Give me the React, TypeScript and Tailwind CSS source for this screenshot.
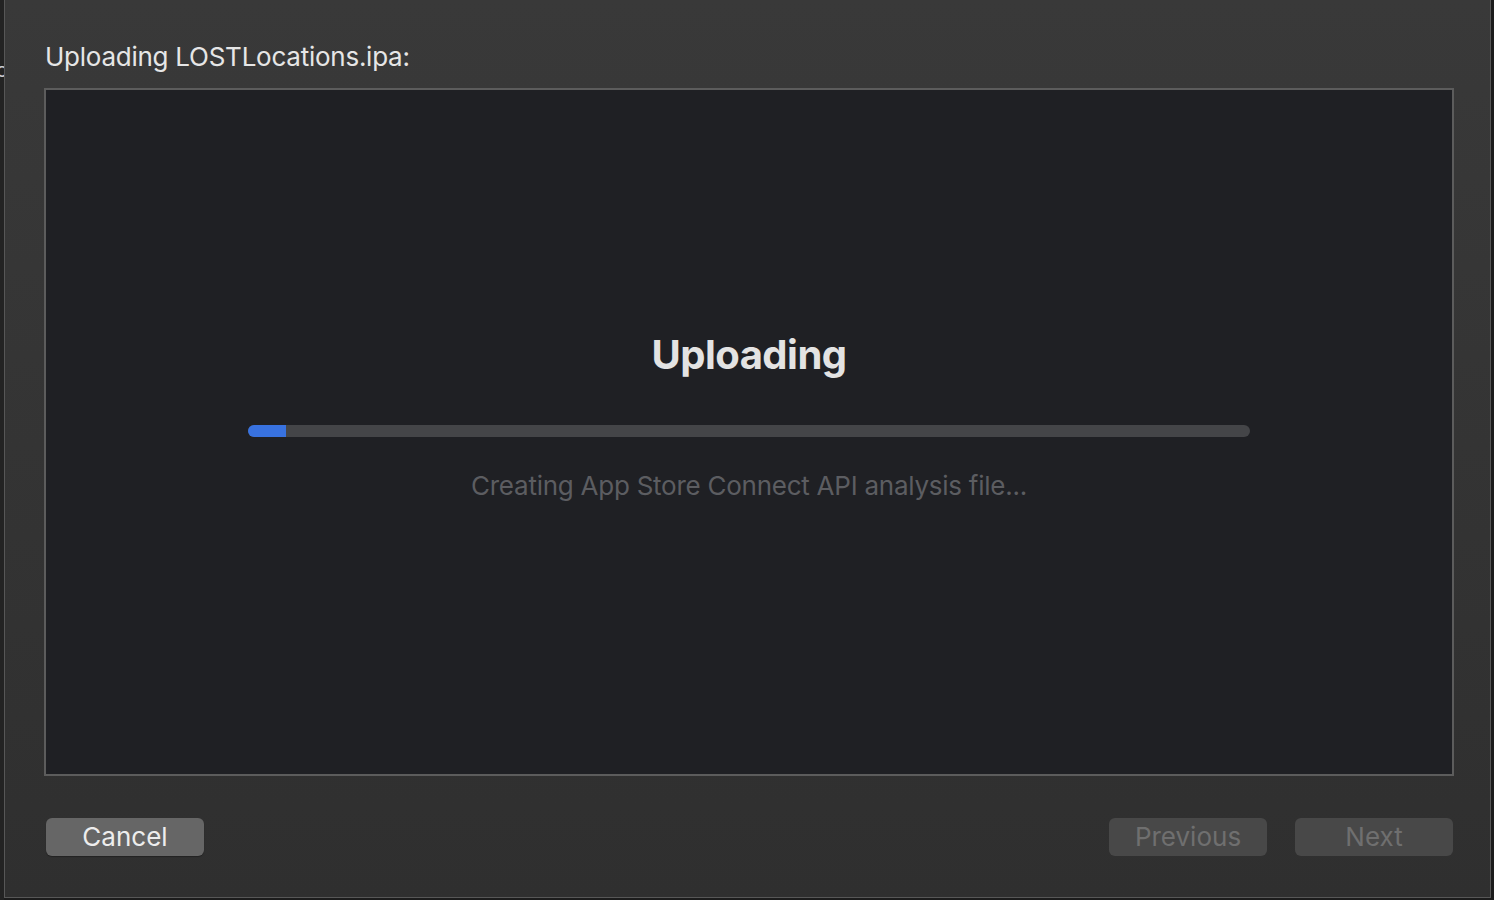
import React from "react";

export default function App() {
  const font = { fontFamily: "Inter, 'Noto Sans', sans-serif" };
  return (
    <div className="w-[1494px] h-[900px] bg-[#1c1c1c] flex overflow-hidden" style={font}>
      <div className="w-[4px] h-full bg-[#232323] relative overflow-hidden">
        <span className="absolute left-[-4px] top-[60px] text-[20px] text-[#cfcfcf] leading-none">c</span>
      </div>
      <div className="w-[1487px] h-[898px] border-l border-r border-b border-[#575757] bg-gradient-to-b from-[#393939] to-[#2f2f2f] flex flex-col">
        <div className="pl-[40px] pt-[41px] h-[88px] text-[26px] leading-[32px] text-[#e6e6e6] tracking-[-0.25px]">
          Uploading LOSTLocations.ipa:
        </div>
        <div className="ml-[39px] w-[1410px] h-[688px] border-2 border-[#5c5c5c] bg-[#1f2024] flex flex-col items-center">
          <div className="mt-[241px] h-[48px] text-[40px] leading-[48px] font-bold text-[#e3e3e3] tracking-[-0.5px]">
            Uploading
          </div>
          <div className="mt-[46px] w-[1002px] h-[12px] rounded-full bg-[#444548] overflow-hidden">
            <div className="h-full bg-[#3872e0]" style={{ width: "38px" }} />
          </div>
          <div className="mt-[33px] text-[26px] leading-[32px] text-[#5c5d61] tracking-[-0.25px]">
            Creating App Store Connect API analysis file...
          </div>
        </div>
        <div className="mt-[42px] flex items-center pl-[41px] pr-[37px]">
          <button className="w-[158px] h-[38px] rounded-[6px] bg-[#666666] text-[26px] leading-none text-[#ededed] shadow-[0_1px_1px_rgba(0,0,0,0.3)]">
            Cancel
          </button>
          <div className="flex-1" />
          <button className="w-[158px] h-[38px] rounded-[6px] bg-[#484848] text-[26px] leading-none text-[#6f6f6f]">
            Previous
          </button>
          <button className="ml-[28px] w-[158px] h-[38px] rounded-[6px] bg-[#484848] text-[26px] leading-none text-[#6f6f6f]">
            Next
          </button>
        </div>
      </div>
    </div>
  );
}
